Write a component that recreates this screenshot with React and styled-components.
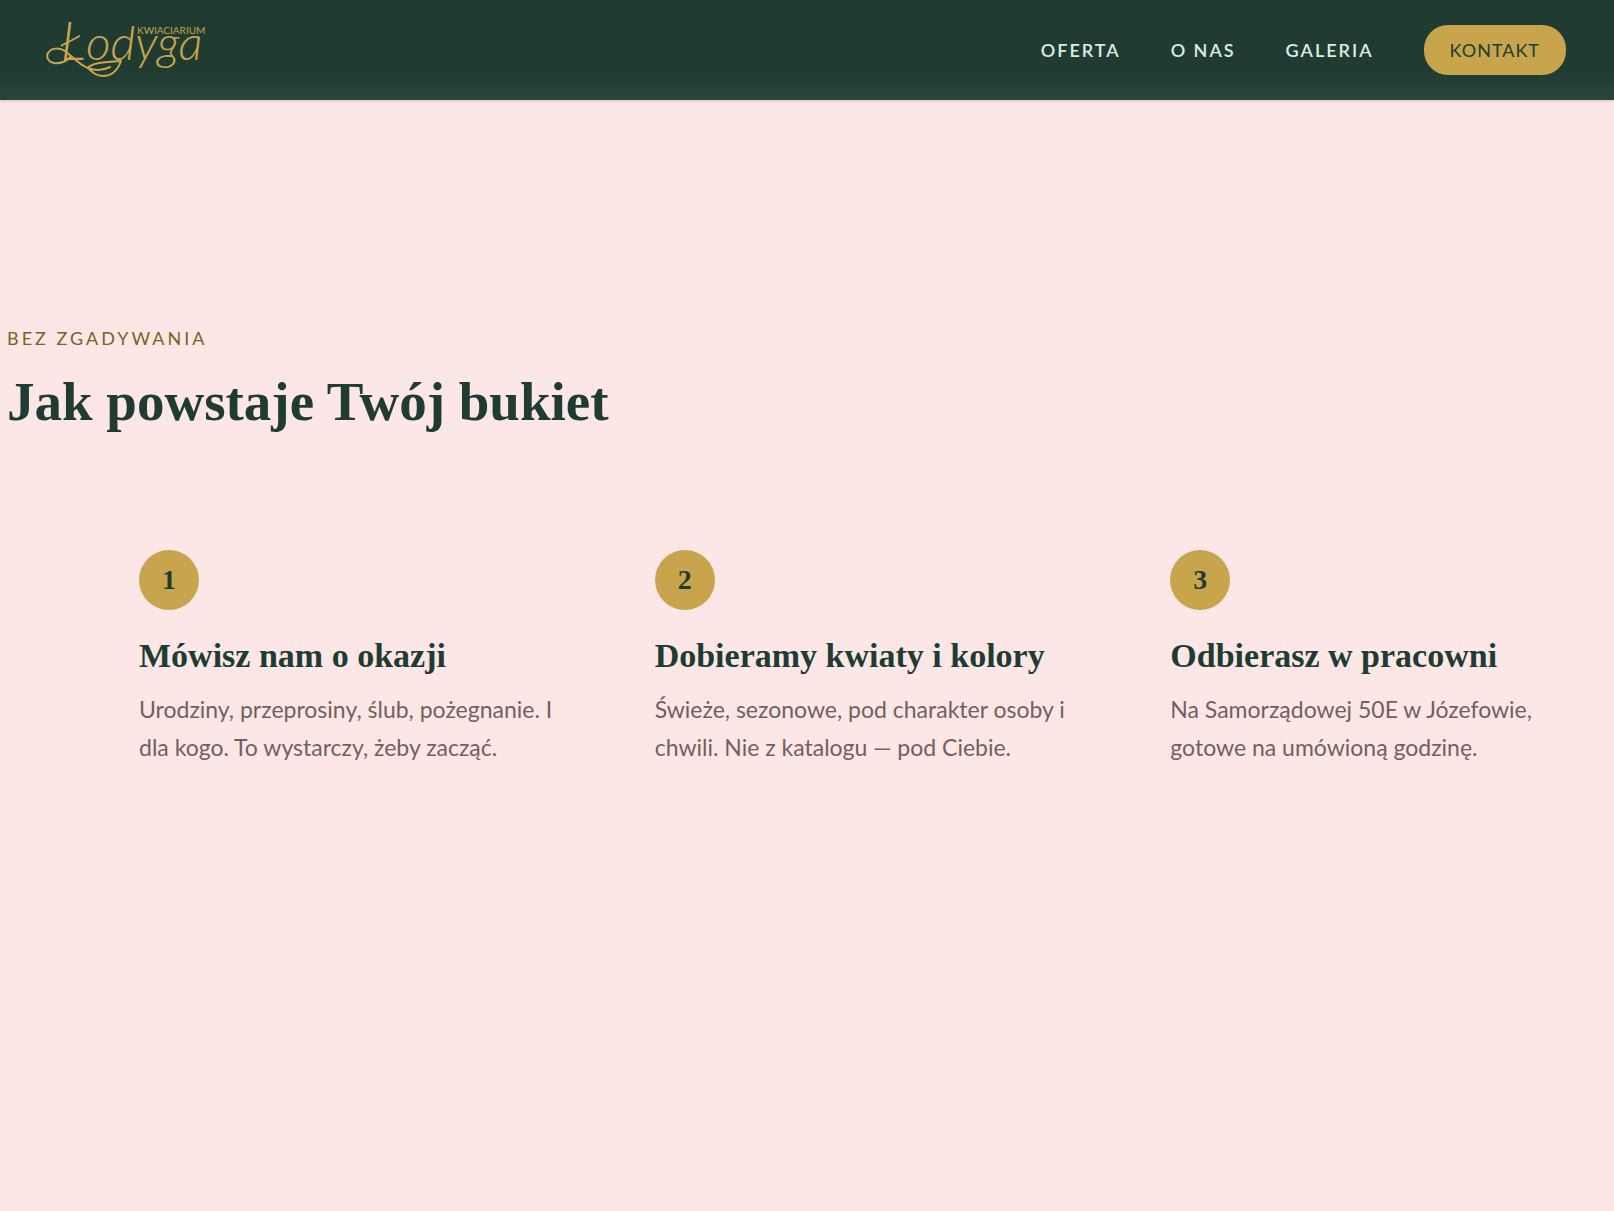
import React from 'react';
import styled, { createGlobalStyle } from 'styled-components';

const colors = {
  blush: '#fde7e6',
  green: '#203c32',
  greenLight: '#2a4439',
  gold: '#c8a54c',
  goldDark: '#7a6224',
  mint: '#dcece3',
  text: '#726060',
};

const fonts = {
  heading: '"Liberation Serif", "Times New Roman", serif',
  body: 'Lato, "Open Sans", sans-serif',
};

const GlobalStyle = createGlobalStyle`
  * {
    box-sizing: border-box;
  }

  body {
    margin: 0;
    background: ${colors.blush};
    color: ${colors.text};
    font-family: ${fonts.body};
  }

  h2,
  h3,
  p,
  ol {
    margin: 0;
    padding: 0;
  }
`;

const Header = styled.header`
  display: flex;
  justify-content: space-between;
  align-items: center;
  height: 100px;
  padding: 0 48px 0 46px;
  background: linear-gradient(${colors.green} 72%, ${colors.greenLight});
  box-shadow: 0 1px 3px rgba(32, 60, 50, 0.2);
`;

const LogoLink = styled.a`
  display: block;

  > svg {
    display: block;
  }
`;

const Nav = styled.nav`
  display: flex;
  align-items: center;
  gap: 50px;
`;

const NavLink = styled.a`
  color: ${colors.mint};
  font-size: 18px;
  font-weight: 600;
  line-height: 24px;
  letter-spacing: 2px;
  text-decoration: none;
  text-transform: uppercase;
`;

const ContactLink = styled(NavLink)`
  padding: 13px 26px;
  border-radius: 24px;
  background: ${colors.gold};
  color: ${colors.green};
  font-weight: 400;
  letter-spacing: 1px;
`;

const Section = styled.section`
  padding: 224px 7px 120px;
`;

const Eyebrow = styled.p`
  color: ${colors.goldDark};
  font-size: 18px;
  line-height: 28px;
  letter-spacing: 3px;
  text-transform: uppercase;
`;

const Title = styled.h2`
  margin-top: 18px;
  color: ${colors.green};
  font-family: ${fonts.heading};
  font-size: 55px;
  font-weight: 700;
  line-height: 64px;
`;

const Steps = styled.ol`
  display: grid;
  grid-template-columns: repeat(3, 1fr);
  gap: 84px;
  margin-top: 116px;
  padding: 0 5px 0 132px;
  list-style: none;

  @media (max-width: 1100px) {
    grid-template-columns: 1fr;
    gap: 48px;
    padding: 0 24px;
  }
`;

const StepNumber = styled.div`
  display: flex;
  align-items: center;
  justify-content: center;
  width: 60px;
  height: 60px;
  border-radius: 50%;
  background: ${colors.gold};
  color: ${colors.green};
  font-family: ${fonts.heading};
  font-size: 28px;
  font-weight: 700;
  line-height: 32px;
`;

const StepTitle = styled.h3`
  margin-top: 24px;
  color: ${colors.green};
  font-family: ${fonts.heading};
  font-size: 34px;
  font-weight: 700;
  line-height: 44px;
`;

const StepText = styled.p`
  margin-top: 12px;
  font-size: 23px;
  line-height: 38px;
`;

const steps = [
  {
    title: 'Mówisz nam o okazji',
    text: 'Urodziny, przeprosiny, ślub, pożegnanie. I dla kogo. To wystarczy, żeby zacząć.',
  },
  {
    title: 'Dobieramy kwiaty i kolory',
    text: 'Świeże, sezonowe, pod charakter osoby i chwili. Nie z katalogu — pod Ciebie.',
  },
  {
    title: 'Odbierasz w pracowni',
    text: 'Na Samorządowej 50E w Józefowie, gotowe na umówioną godzinę.',
  },
];

const Logo = () => (
  <svg width="162" height="88" viewBox="0 -8 162 88" role="img" aria-label="Kwiaciarium Łodyga">
    <g fill={colors.gold} fontFamily="Lato, sans-serif">
      <text x="91" y="20" fontSize="10">KWIACIARIUM</text>
      <text x="14" y="46" fontSize="48" fontWeight="300" fontStyle="italic">
        <tspan fontSize="54">Ł</tspan>
        odyga
      </text>
    </g>
    {/* stem loop and leaf */}
    <g fill="none" stroke={colors.gold} strokeWidth="2" strokeLinecap="round" strokeLinejoin="round">
      <path d="M25 42 C22 47 14 50 8 49 C2 48 0 43 2 39 C5 34 13 33 19 37 C27 43 33 51 42 54" />
      <path d="M42 54 C45 49 58 48 75 47 C71 58 65 62 57 62 C50 62 46 58 42 54 C50 57 58 56 64 53" />
    </g>
  </svg>
);

const App = () => (
  <>
    <GlobalStyle />
    <Header>
      <LogoLink href="#">
        <Logo />
      </LogoLink>
      <Nav>
        <NavLink href="#oferta">Oferta</NavLink>
        <NavLink href="#o-nas">O nas</NavLink>
        <NavLink href="#galeria">Galeria</NavLink>
        <ContactLink href="#kontakt">Kontakt</ContactLink>
      </Nav>
    </Header>
    <main>
      <Section>
        <Eyebrow>Bez zgadywania</Eyebrow>
        <Title>Jak powstaje Twój bukiet</Title>
        <Steps>
          {steps.map(({ title, text }, index) => (
            <li key={title}>
              <StepNumber>{index + 1}</StepNumber>
              <StepTitle>{title}</StepTitle>
              <StepText>{text}</StepText>
            </li>
          ))}
        </Steps>
      </Section>
    </main>
  </>
);

export default App;
